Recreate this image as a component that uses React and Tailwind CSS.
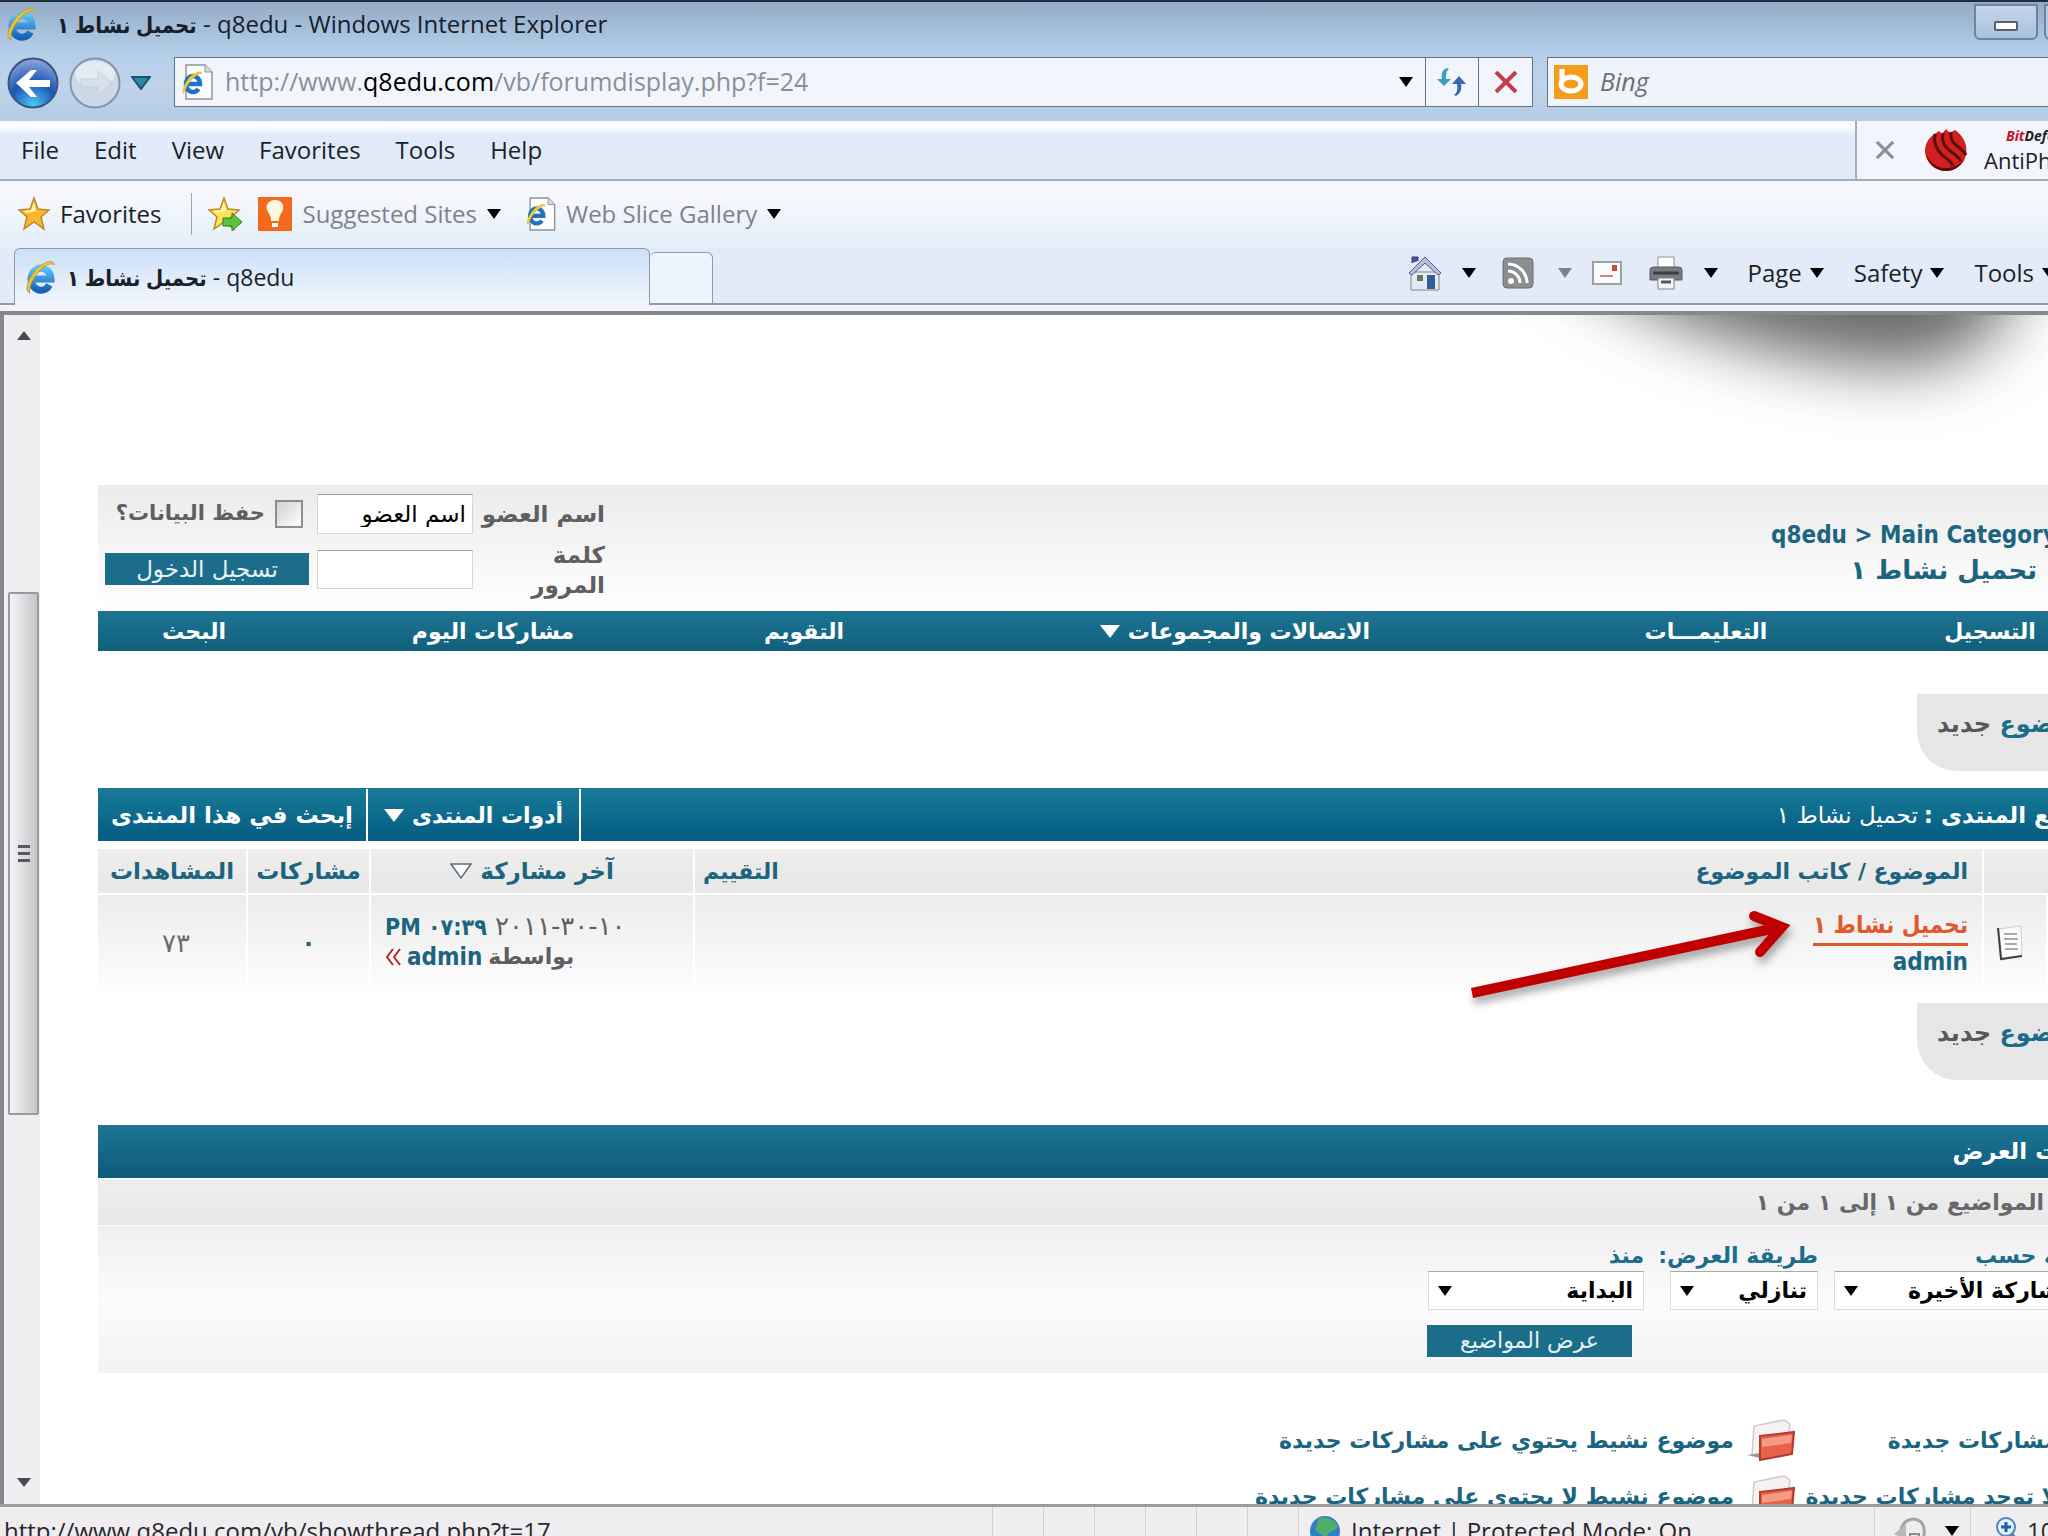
const UI_FONT = "font-[family-name:Open_Sans,DejaVu_Sans_Condensed,sans-serif]";
const FORUM_FONT = "font-[family-name:DejaVu_Sans,sans-serif]";
const NARROW_FONT = "font-[family-name:DejaVu_Sans_Condensed,DejaVu_Sans,sans-serif]";

function IeLogo({ className }) {
  return (
    <svg viewBox="0 0 32 36" className={className} aria-hidden="true">
      <defs>
        <linearGradient id="ie-blue" x1="0" y1="0" x2="0" y2="1">
          <stop offset="0" stopColor="#5cc3f5" />
          <stop offset="1" stopColor="#1763b8" />
        </linearGradient>
      </defs>
      <path d="M8 20 H26 A10 11 0 1 0 24.500 26" fill="none" stroke="url(#ie-blue)" strokeWidth="7" />
      <path d="M5 34 C-2 32 4 17 14 8 C21 2 29 0 29 6 C26 3 20 6 15 11 C8 19 3 28 5 34 Z" fill="#f3c532" stroke="#b8a03a" strokeWidth="1" />
    </svg>
  );
}

function IePage({ className }) {
  return (
    <svg viewBox="0 0 32 36" className={className} aria-hidden="true">
      <path d="M5 1 H24 L31 8 V35 H5 Z" fill="#fdfdfd" stroke="#8d949c" strokeWidth="1.500" />
      <path d="M24 1 V8 H31" fill="#d9dde2" stroke="#8d949c" />
      <path d="M6 20 H19 A7 8 0 1 0 17.500 25" fill="none" stroke="#1f72c4" strokeWidth="4.500" />
      <path d="M3 30 C-1 28 4 17 11 11 C16 7 22 6 21 10 C17 8 5 20 3 30 Z" fill="#e9c63a" />
    </svg>
  );
}

function Caret({ className = "text-black" }) {
  return (
    <svg viewBox="0 0 14 10" className={`h-[10px] w-[14px] shrink-0 ${className}`} aria-hidden="true">
      <path d="M0 0 H14 L7 10 Z" fill="currentColor" />
    </svg>
  );
}

function WideCaret() {
  return (
    <svg viewBox="0 0 20 13" className="h-[13px] w-5 shrink-0" aria-hidden="true">
      <path d="M0 0 H20 L10 13 Z" fill="currentColor" />
    </svg>
  );
}

function Star({ add }) {
  return (
    <svg viewBox="0 0 34 36" className="h-9 w-[34px] shrink-0" aria-hidden="true">
      <path d="M16 2 L20 13 L31 14 L23 21 L26 33 L16 26 L6 33 L9 21 L1 14 L12 13 Z" fill={add ? "#fbe35a" : "#fdb52b"} stroke="#b98a2c" strokeWidth="1.500" />
      <path d="M16 6 L18 15 L9 17 L5 15 L13 14 Z" fill="#fff3b0" />
      {add && <path d="M15 22 H24 V17 L34 26 L24 35 V30 H15 Z" fill="#5cc43a" stroke="#2f7d1e" />}
    </svg>
  );
}

function TitleBar() {
  return (
    <header className="flex h-[52px] items-start justify-between border-t-2 border-[#1f2c3d] bg-linear-to-b from-[#93abc6] to-[#b4cfe9]">
      <div className="flex h-11 items-center gap-[18px] pl-[5px]">
        <IeLogo className="h-9 w-[34px]" />
        <h1 dir="ltr" className="whitespace-nowrap text-[24px] text-[#16202c]">
          <span className="text-[22px] font-bold">تحميل نشاط ١</span> - q8edu - Windows Internet Explorer
        </h1>
      </div>
      <div className="flex gap-[6px] overflow-hidden pt-[2px]">
        <button aria-label="Minimize" className="flex h-9 w-[64px] items-end justify-center rounded-b-md border-2 border-[#6d83a0] bg-linear-to-b from-[#c3d6ea] to-[#a9c3de] pb-[7px]">
          <span className="h-[10px] w-6 rounded-xs border-2 border-[#56606e] bg-white" />
        </button>
        <button aria-label="Maximize" className="-mr-14 h-9 w-[60px] rounded-bl-md border-2 border-[#6d83a0] bg-[#b4cbe3]" />
      </div>
    </header>
  );
}

function AddressBar() {
  return (
    <div className="flex h-[69px] items-start bg-linear-to-b from-[#b4cfe9] via-[#bfd3ea] to-[#b3cde4] pt-[5px]">
      <div className="flex w-[174px] shrink-0 items-center gap-[10px] pl-[7px]">
        <button aria-label="Back">
          <svg viewBox="0 0 52 52" className="h-[52px] w-[52px]">
            <defs>
              <radialGradient id="back-fill" cx="0.5" cy="0.95" r="0.95">
                <stop offset="0" stopColor="#4fc8f6" />
                <stop offset="0.5" stopColor="#1b55b4" />
                <stop offset="1" stopColor="#8fa9de" />
              </radialGradient>
            </defs>
            <circle cx="26" cy="26" r="24.500" fill="url(#back-fill)" stroke="#39557f" strokeWidth="2" />
            <path d="M9 26 L24 13 H30 L22 23 H43 V30 H22 L30 40 H24 Z" fill="#fff" />
          </svg>
        </button>
        <button aria-label="Forward">
          <svg viewBox="0 0 52 52" className="h-[52px] w-[52px]">
            <circle cx="26" cy="26" r="24.500" fill="#cbd8e6" stroke="#8494aa" strokeWidth="2" />
            <ellipse cx="26" cy="17" rx="20" ry="13" fill="#e3ebf3" />
            <path d="M43 26 L29 14 V22 H12 V30 H29 V38 Z" fill="#d7e0eb" stroke="#c3cfdc" />
          </svg>
        </button>
        <svg viewBox="0 0 20 14" className="h-[14px] w-5" aria-hidden="true">
          <path d="M1 1 H19 L10 13 Z" fill="#2b8aa8" stroke="#1f4f74" strokeWidth="2" />
        </svg>
      </div>
      <div className="flex h-[50px] min-w-0 flex-1 items-stretch border border-[#5f7286] bg-[#f2f6fc]">
        <div className="flex min-w-0 flex-1 items-center gap-3 pl-[6px]">
          <IePage className="h-9 w-8 shrink-0" />
          <p className="whitespace-nowrap text-[25px] text-[#8a8f98]">
            http://www.<span className="text-black">q8edu.com</span>/vb/forumdisplay.php?f=24
          </p>
        </div>
        <button aria-label="Address history" className="flex w-[39px] items-center justify-center"><Caret /></button>
        <button aria-label="Refresh" className="flex w-[53px] items-center justify-center border-l border-[#5f7286]">
          <svg viewBox="0 0 32 30" className="h-[30px] w-8">
            <path d="M11 1 C6 3 5 7 6 12 H1 L8 19 L15 12 H10 C10 8 10 4 13 2 Z" fill="#38a0bd" />
            <path d="M20 29 C25 26 26 22 25 17 H30 L23 9 L16 17 H21 C22 22 21 26 18 28 Z" fill="#3a69b0" />
          </svg>
        </button>
        <button aria-label="Stop" className="flex w-[54px] items-center justify-center border-l border-[#5f7286]">
          <svg viewBox="0 0 24 22" className="h-[22px] w-6">
            <path d="M2 1 L22 21 M22 1 L2 21" stroke="#c93a4b" strokeWidth="4" />
          </svg>
        </button>
      </div>
      <div className="ml-[14px] flex h-[50px] w-[501px] shrink-0 items-center gap-3 border border-r-0 border-[#5f7286] bg-[#eff4fb] pl-[6px]">
        <svg viewBox="0 0 34 34" className="h-[34px] w-[34px] shrink-0" aria-hidden="true">
          <rect width="34" height="34" fill="#f59d1a" />
          <path d="M8 4 V18" stroke="#fff" strokeWidth="5" />
          <ellipse cx="17" cy="19" rx="10" ry="7" fill="none" stroke="#fff" strokeWidth="5" />
        </svg>
        <input aria-label="Search" placeholder="Bing" className="w-full bg-transparent text-[25px] italic outline-none placeholder:text-[#6b6f76]" />
      </div>
    </div>
  );
}

function MenuBar() {
  return (
    <div className="flex h-[60px] items-stretch justify-between border-b-2 border-[#a3adba] bg-linear-to-b from-[#fbfcff] from-10% to-[#e1eaf8] to-25%">
      <nav className="flex items-center gap-[35px] pl-[21px] text-[24px] text-[#1b1f27]">
        {["File", "Edit", "View", "Favorites", "Tools", "Help"].map((m) => (
          <button key={m}>{m}</button>
        ))}
      </nav>
      <div className="flex w-[193px] items-center overflow-hidden border-l-2 border-[#a3adba] bg-[#f2f5fc] pl-[18px]">
        <button aria-label="Close toolbar" className="shrink-0">
          <svg viewBox="0 0 22 20" className="h-[18px] w-5">
            <path d="M2 1 L20 19 M20 1 L2 19" stroke="#8b8f96" strokeWidth="3.500" />
          </svg>
        </button>
        <svg viewBox="0 0 44 44" className="ml-[29px] h-[44px] w-[44px] shrink-0" aria-hidden="true">
          <path d="M9 7 L15 3 L18 6 L22 1 L26 5 L31 2 C40 8 44 18 42 27 C40 37 31 43 22 43 C11 43 2 35 1 24 C1 16 4 11 9 7 Z" fill="#d1201f" />
          <path d="M11 6 C9 16 13 22 18 27 C23 31 27 33 29 38 M19 5 C17 13 20 18 25 22 C30 26 34 28 37 33 M27 4 C26 10 29 15 33 18 C37 21 40 23 42 27" fill="none" stroke="#5c0d10" strokeWidth="3" />
          <path d="M2 26 C6 36 15 41 24 40 C31 39 37 36 40 31 C36 39 30 43 22 43 C12 43 4 36 2 26 Z" fill="#5c0d10" />
        </svg>
        <div className="ml-4 flex shrink-0 flex-col text-[#1b1f27]">
          <p className="pl-[22px] text-[14px] leading-5 font-bold italic"><span className="text-[#c8102e]">Bit</span>Defender</p>
          <p className="text-[22px] leading-7">AntiPhishing</p>
        </div>
      </div>
    </div>
  );
}

function FavoritesBar() {
  return (
    <div className="flex h-[67px] items-center bg-linear-to-b from-[#f5f7fd] from-30% to-[#e2eef8] pb-[2px] text-[24px]">
      <button className="flex items-center gap-2 pl-[18px] text-[#1b1f27]"><Star /> Favorites</button>
      <span className="ml-[30px] h-[42px] w-px bg-[#9aa3b0]" />
      <button aria-label="Add to Favorites Bar" className="ml-4"><Star add /></button>
      <button className="ml-4 flex items-center gap-[10px] text-[#7d828b]">
        <svg viewBox="0 0 34 34" className="h-[34px] w-[34px]" aria-hidden="true">
          <rect width="34" height="34" fill="#f36a1d" />
          <path d="M17 3 C9 3 7 10 10 15 C12 18 13 20 13 24 H21 C21 20 22 18 24 15 C27 10 25 3 17 3 Z" fill="#fff6e0" />
          <path d="M14 26 H20 V30 H14 Z" fill="#fff" />
        </svg>
        Suggested Sites <Caret />
      </button>
      <button className="ml-6 flex items-center gap-[10px] text-[#7d828b]">
        <IePage className="h-[34px] w-[31px]" />
        Web Slice Gallery <Caret />
      </button>
    </div>
  );
}

function CommandBar() {
  return (
    <div className="flex items-center pb-[6px] text-[24px] text-[#1b1f27]">
      <button aria-label="Home" className="flex items-center gap-5">
        <svg viewBox="0 0 34 36" className="h-9 w-[34px]">
          <path d="M4 8 V2 H10 V6" fill="#4b4fae" stroke="#3c3f80" />
          <path d="M3 17 H31 V35 H3 Z" fill="#e6e9ef" stroke="#7e8592" />
          <path d="M1 18 L17 2 L33 18 L30 20 L17 8 L4 20 Z" fill="#b9bfd6" stroke="#53599a" />
          <path d="M19 20 H27 V34 H19 Z" fill="#2e5f99" />
          <path d="M9 20 H15 V26 H9 Z" fill="#5f7b63" />
        </svg>
        <Caret />
      </button>
      <button aria-label="Feeds" className="ml-[26px] flex items-center gap-6">
        <svg viewBox="0 0 32 32" className="h-8 w-8">
          <rect x="1" y="1" width="30" height="30" rx="4" fill="#8b8d8f" stroke="#6d7072" />
          <circle cx="9" cy="24" r="3" fill="#fff" />
          <path d="M6 14 A12 12 0 0 1 18 26 M6 7 A19 19 0 0 1 25 26" fill="none" stroke="#fff" strokeWidth="3" />
        </svg>
        <Caret className="text-[#7c828b]" />
      </button>
      <button aria-label="Read mail" className="ml-5">
        <svg viewBox="0 0 30 24" className="h-6 w-[30px]">
          <rect x="1" y="1" width="28" height="22" fill="#fbfbfb" stroke="#9aa0a8" strokeWidth="2" />
          <rect x="20" y="4" width="5" height="6" fill="#c64a48" />
          <path d="M8 15 H21" stroke="#c08a88" strokeWidth="2" />
        </svg>
      </button>
      <button aria-label="Print" className="ml-[26px] flex items-center gap-5">
        <svg viewBox="0 0 36 34" className="h-[34px] w-9">
          <path d="M10 1 H26 V14 H10 Z" fill="#fff" stroke="#8d9298" />
          <path d="M2 14 Q2 11 6 11 H30 Q34 11 34 14 V24 H2 Z" fill="#777c82" stroke="#54585e" />
          <path d="M5 17 H31" stroke="#3c4046" strokeWidth="3" />
          <path d="M10 22 H26 V33 H10 Z" fill="#f6f6f6" stroke="#7f848a" />
          <path d="M13 26 H23" stroke="#54585e" strokeWidth="3" />
        </svg>
        <Caret />
      </button>
      <button className="ml-[30px] flex items-center gap-2">Page <Caret /></button>
      <button className="ml-[30px] flex items-center gap-2">Safety <Caret /></button>
      <button className="-mr-2 ml-[30px] flex items-center gap-2">Tools <Caret /></button>
    </div>
  );
}

function TabRow() {
  return (
    <div className="flex h-[57px] shrink-0 items-stretch bg-[#e2ebf7]">
      <div className="w-[14px] border-b-2 border-[#8f9bab]" />
      <div className="flex w-[636px] items-center gap-[10px] rounded-t-md border border-b-0 border-[#8f9bab] bg-linear-to-b from-[#cbdff7] to-[#f3f7fd] pl-[10px] text-[23px] text-[#1b1f27]">
        <IeLogo className="h-9 w-8" />
        <p dir="ltr"><span className="text-[22px] font-bold">تحميل نشاط ١</span> - q8edu</p>
      </div>
      <div className="flex flex-1 items-stretch justify-between border-b-2 border-[#8f9bab]">
        <button aria-label="New tab" className="mt-1 w-[63px] rounded-t-md border border-b-0 border-l-0 border-[#8f9bab] bg-[#eef4fc]" />
        <CommandBar />
      </div>
    </div>
  );
}

function Scrollbar() {
  return (
    <div className="flex w-10 shrink-0 flex-col border-l-4 border-[#85888c] bg-[#f0eef1] pl-1">
      <button aria-label="Scroll up" className="flex h-10 items-center justify-center">
        <svg viewBox="0 0 14 9" className="h-[9px] w-[14px]"><path d="M0 9 L7 0 L14 9 Z" fill="#474b52" /></svg>
      </button>
      <div className="mt-[237px] flex h-[523px] w-[31px] flex-col items-center justify-center gap-1 rounded-xs border-2 border-[#979a9f] bg-linear-to-r from-[#f5f5f6] to-[#c6c6ca]">
        <span className="h-[3px] w-3 bg-[#55585e]" />
        <span className="h-[3px] w-3 bg-[#55585e]" />
        <span className="h-[3px] w-3 bg-[#55585e]" />
      </div>
      <button aria-label="Scroll down" className="mt-auto flex h-11 items-center justify-center">
        <svg viewBox="0 0 14 9" className="h-[9px] w-[14px]"><path d="M0 0 H14 L7 9 Z" fill="#474b52" /></svg>
      </button>
    </div>
  );
}

function LoginForm() {
  return (
    <form className="grid w-[513px] grid-cols-[126px_156px_206px] content-start gap-x-[6px] pt-[9px] pr-[6px] text-[23px] font-bold text-[#5d5f63]">
      <label htmlFor="username" className="flex h-10 items-center whitespace-nowrap">اسم العضو</label>
      <input id="username" defaultValue="اسم العضو" className="h-10 w-full border border-[#d5d5d5] border-t-[#9b9b9b] bg-white px-[6px] font-normal text-black" />
      <label className="flex h-10 items-center gap-[10px] whitespace-nowrap pr-2 text-[21px]">
        <input type="checkbox" className="h-7 w-7 shrink-0 appearance-none border-2 border-[#8a8d91] bg-linear-to-br from-[#cfd1d3] to-white" />
        حفظ البيانات؟
      </label>
      <label htmlFor="password" className="mt-[6px] w-20 leading-[30px]">كلمة المرور</label>
      <input id="password" type="password" className="mt-4 h-[39px] w-full border border-[#d5d5d5] border-t-[#9b9b9b] bg-white px-[6px]" />
      <button type="button" className="mt-[19px] h-8 w-[204px] justify-self-end bg-[#1b6d8a] leading-8 font-normal text-[#e5f2f6]">تسجيل الدخول</button>
    </form>
  );
}

function ForumNav() {
  return (
    <nav className="grid h-10 grid-cols-[272fr_296fr_646fr_216fr_406fr_192fr] items-center border-t border-[#2d6f86] bg-linear-to-b from-[#1d7593] to-[#115f7c] text-center text-[22px] font-bold text-white">
      <a href="#register">التسجيل</a>
      <a href="#faq">التعليمـــات</a>
      <a href="#community" className="flex items-center justify-center gap-2">
        الاتصالات والمجموعات
        <WideCaret />
      </a>
      <a href="#calendar">التقويم</a>
      <a href="#today">مشاركات اليوم</a>
      <a href="#search">البحث</a>
    </nav>
  );
}

function NewTopic({ className }) {
  return (
    <a href="#new" className={`flex h-[77px] w-[209px] items-start justify-end rounded-bl-[40px] bg-[#e6e6e6] pt-3 pl-5 text-[24px] font-bold text-[#1b6d8a] ${className}`}>
      <span className="whitespace-nowrap">موضوع <span className="text-[#55575b]">جديد</span></span>
    </a>
  );
}

function ThreadTable() {
  return (
    <table className="mt-2 w-full table-fixed border-separate border-spacing-0 text-[23px]">
      <colgroup>
        <col className="w-[80px]" />
        <col className="w-[64px]" />
        <col />
        <col className="w-[324px]" />
        <col className="w-[123px]" />
        <col className="w-[148px]" />
      </colgroup>
      <thead>
        <tr className="h-[44px] whitespace-nowrap text-[#1b6580] *:bg-linear-to-b *:from-[#efeeec] *:to-[#e7e7e8] [&>*:not(:last-child)]:border-l-2 [&>*:not(:last-child)]:border-white">
          <th colSpan={2} />
          <th className="pr-[14px] pl-2 text-[22px]">
            <div className="flex justify-between"><span>الموضوع / كاتب الموضوع</span><span>التقييم</span></div>
          </th>
          <th>
            <span className="flex items-center justify-center gap-2">
              آخر مشاركة
              <svg viewBox="0 0 22 16" className="h-4 w-[22px]"><path d="M1 1 H21 L11 15 Z" fill="#fff" stroke="#55707c" strokeWidth="1.500" /></svg>
            </span>
          </th>
          <th>مشاركات</th>
          <th>المشاهدات</th>
        </tr>
      </thead>
      <tbody>
        <tr className="h-[98px] *:border-t-2 *:border-white *:bg-linear-to-b *:from-[#ececed] *:to-[#fdfdfd] [&>*:not(:last-child)]:border-l-2">
          <td />
          <td>
            <svg viewBox="0 0 28 36" className="mr-[22px] h-9 w-7" aria-hidden="true">
              <path d="M3 4 L25 1 L26 30 L6 35 Z" fill="#fafafa" stroke="#cfcfcf" />
              <path d="M2 3 L5 34 L26 31" fill="none" stroke="#3e3e40" strokeWidth="2" />
              <path d="M8 9 H21 M8 14 H22 M9 19 H21 M9 24 H22" stroke="#aaaaac" strokeWidth="2" />
            </svg>
          </td>
          <td className="relative pr-[14px] align-top">
            <div className={`flex flex-col items-start pt-3 font-bold ${NARROW_FONT}`}>
              <a href="#thread" className="border-b-[3px] border-[#e2572b] text-[24px] leading-9 text-[#e2572b]">تحميل نشاط ١</a>
              <a href="#admin" className="text-[24px] leading-8 text-[#1b6580]">admin</a>
            </div>
            <svg viewBox="0 0 330 100" className="absolute top-[14px] right-[184px] h-[100px] w-[330px] overflow-visible drop-shadow-[2px_6px_4px_rgba(0,0,0,0.35)]" aria-hidden="true">
              <path d="M4 84 L308 19" stroke="#c00000" strokeWidth="10" />
              <path d="M286 7 L314 18 L292 43" fill="none" stroke="#c00000" strokeWidth="10" strokeLinecap="round" strokeLinejoin="miter" />
            </svg>
          </td>
          <td className="pl-[14px] align-top text-[#5d5f63]">
            <div className="flex flex-col items-end pt-4 leading-[30px] whitespace-nowrap">
              <p className="text-[26px]">١٠-٣٠-٢٠١١ <b className={`text-[23px] text-[#1b6580] ${NARROW_FONT}`}>٠٧:٣٩ PM</b></p>
              <p className="flex items-center gap-[6px]">
                <b className="text-[22px]">بواسطة</b>
                <a href="#admin" className={`text-[24px] font-bold text-[#1b6580] ${NARROW_FONT}`}>admin</a>
                <svg viewBox="0 0 16 18" className="h-[18px] w-4"><path d="M8 1 L2 9 L8 17 M15 1 L9 9 L15 17" fill="none" stroke="#b3282d" strokeWidth="2" /></svg>
              </p>
            </div>
          </td>
          <td className="text-center font-bold text-[#1b6580]">٠</td>
          <td className="pl-2 text-center text-[26px] text-[#6a6c70]">٧٣</td>
        </tr>
      </tbody>
    </table>
  );
}

function FilterSelect({ id, label, option, className }) {
  return (
    <div className={`flex flex-col ${className}`}>
      <label htmlFor={id} className="h-[31px] whitespace-nowrap leading-[31px] text-[#1b6d8a]">{label}</label>
      <div className="relative">
        <select id={id} className="h-[39px] w-full appearance-none border border-[#dcdcdc] border-t-[#a9a9a9] bg-white pr-[10px] pl-10 font-bold text-black">
          <option>{option}</option>
        </select>
        <span className="pointer-events-none absolute top-[15px] left-[10px]"><Caret /></span>
      </div>
    </div>
  );
}

function DisplayOptions() {
  return (
    <section className="mt-[45px] text-[22px] font-bold">
      <h2 className="flex h-[53px] items-center bg-linear-to-b from-[#1e7592] to-[#0d5a7c] pr-3 text-[23px] text-white">خيارات العرض</h2>
      <p className="flex h-[48px] items-center border-y border-white bg-linear-to-b from-[#efeeec] to-[#e8e8ea] pr-4 text-[#66686c]">عرض المواضيع من ١ إلى ١ من ١</p>
      <form className="h-[147px] bg-linear-to-b from-[#efeff1] via-[#fbfbfc] to-[#f3f3f5] pt-[14px] pr-6">
        <div className="flex">
          <FilterSelect id="sort" label="مرتبة حسب" option="المشاركة الأخيرة" className="w-[268px]" />
          <FilterSelect id="order" label="طريقة العرض:" option="تنازلي" className="mr-4 w-[148px]" />
          <FilterSelect id="since" label="منذ" option="البداية" className="mr-[26px] w-[216px]" />
        </div>
        <button type="button" className="mt-[15px] mr-[470px] block h-8 w-[205px] bg-[#1b6d8a] leading-8 font-normal text-[#e5f2f6]">عرض المواضيع</button>
      </form>
    </section>
  );
}

function HotFolder() {
  return (
    <svg viewBox="0 0 50 42" className="h-[42px] w-[50px] shrink-0" aria-hidden="true">
      <path d="M6 36 L8 7 L38 1 L44 5 L40 34 Z" fill="#f5f2f2" stroke="#cdc9c9" strokeWidth="1.500" />
      <path d="M1 36 L14 34 V39 Z" fill="#9a9898" />
      <path d="M14 17 L48 13 L46 35 L14 41 Z" fill="#e8614d" stroke="#b03b2c" strokeWidth="2" />
      <path d="M16 20 L46 16 L45 24 L16 28 Z" fill="#f79a84" />
    </svg>
  );
}

const legend = [
  ["مشاركات جديدة", "موضوع نشيط يحتوي على مشاركات جديدة"],
  ["لا توجد مشاركات جديدة", "موضوع نشيط لا يحتوي على مشاركات جديدة"],
];

function Legend() {
  return (
    <ul className="mt-[46px] flex flex-col gap-[14px] text-[22px] font-bold whitespace-nowrap text-[#1b6580]">
      {legend.map(([first, second]) => (
        <li key={second} className="flex h-[42px] items-center">
          <span className="w-[330px] shrink-0 pr-[68px]">{first}</span>
          <span className="flex items-center gap-3"><HotFolder /> {second}</span>
        </li>
      ))}
    </ul>
  );
}

function Forum() {
  return (
    <div dir="rtl" className={`w-[calc(100%+78px)] shrink-0 ${FORUM_FONT}`}>
      <div dir="ltr" className="relative h-[170px]">
        <svg viewBox="0 0 640 169" className="absolute top-0 right-[78px] h-[169px] w-[640px]" aria-hidden="true">
          <defs>
            <filter id="soft" x="-40%" y="-100%" width="180%" height="300%">
              <feGaussianBlur stdDeviation="34 32" />
            </filter>
          </defs>
          <path d="M130 -90 C200 0 370 50 500 52 C575 48 610 0 625 -90 Z" fill="#6a6a6a" filter="url(#soft)" />
        </svg>
      </div>
      <div className="flex h-[126px] justify-between bg-linear-to-b from-[#ebebeb] to-white font-bold text-[#1b6580]">
        <div className="pt-[33px] pr-[60px]">
          <p dir="ltr" className={`-mr-[40px] w-[335px] text-[24px] leading-[34px] whitespace-nowrap ${NARROW_FONT}`}>q8edu &gt; Main Category</p>
          <p className="pr-[29px] text-[26px] leading-[36px]">تحميل نشاط ١</p>
        </div>
        <LoginForm />
      </div>
      <ForumNav />
      <NewTopic className="mt-[43px]" />
      <div className="mt-[17px] flex h-[53px] items-stretch border-t border-[#2d6f86] bg-linear-to-b from-[#177a96] to-[#045c82] text-[23px] font-bold text-white">
        <p className="flex flex-1 items-center gap-[6px] pr-2">مواضيع المنتدى : <span className="font-normal">تحميل نشاط ١</span></p>
        <button className="flex w-[213px] items-center justify-center gap-2 border-r-2 border-white text-[22px]">أدوات المنتدى <WideCaret /></button>
        <button className="w-[270px] border-r-2 border-white">إبحث في هذا المنتدى</button>
      </div>
      <ThreadTable />
      <NewTopic className="mt-3" />
      <DisplayOptions />
      <Legend />
    </div>
  );
}

function StatusBar() {
  return (
    <footer className="h-[32px] shrink-0 overflow-hidden border-t-[3px] border-[#9c9ca0] bg-[#f0edf0] text-[24px] text-[#26282c]">
      <div className="flex h-12 items-stretch pl-1">
        <p className="flex-1 self-center whitespace-nowrap">http://www.q8edu.com/vb/showthread.php?t=17</p>
        {[1, 2, 3, 4, 5, 6].map((n) => (
          <span key={n} className="w-[51px] border-l border-[#d3d0d4]" />
        ))}
        <div className="flex w-[576px] items-center gap-[10px] border-l border-[#d3d0d4] pl-[10px]">
          <svg viewBox="0 0 32 32" className="h-8 w-8">
            <circle cx="16" cy="16" r="15" fill="#2f7fc4" />
            <path d="M10 3 C18 1 26 5 29 11 C26 18 21 14 19 20 C14 24 10 17 6 15 Z" fill="#4fae6a" />
          </svg>
          Internet | Protected Mode: On
        </div>
        <button aria-label="Privacy" className="flex w-[96px] items-center gap-[18px] border-l border-[#d3d0d4] pl-[18px]">
          <svg viewBox="0 0 34 34" className="h-[34px] w-[34px]">
            <path d="M8 16 C10 6 20 2 28 8 C33 14 32 22 28 27" fill="none" stroke="#a5a5a9" strokeWidth="3" />
            <path d="M1 20 L13 10 V26 Z" fill="#b9b9bd" />
            <path d="M17 30 V20 H26 V30 Z" fill="none" stroke="#8d8d92" strokeWidth="2" />
          </svg>
          <Caret />
        </button>
        <button className="flex w-[78px] items-center gap-2 overflow-hidden border-l border-[#d3d0d4] pl-6">
          <svg viewBox="0 0 24 30" className="h-[30px] w-6 shrink-0">
            <path d="M16 17 L23 28" stroke="#6c7a8a" strokeWidth="4" />
            <circle cx="11" cy="11" r="9" fill="#e3f1fb" stroke="#4a86c0" strokeWidth="2" />
            <path d="M11 6 V16 M6 11 H16" stroke="#1e5fae" strokeWidth="3" />
          </svg>
          100%
        </button>
      </div>
    </footer>
  );
}

export default function App() {
  return (
    <div className={`flex h-screen flex-col overflow-hidden bg-white ${UI_FONT}`}>
      <TitleBar />
      <AddressBar />
      <MenuBar />
      <FavoritesBar />
      <TabRow />
      <div className="h-[10px] shrink-0 border-b-4 border-[#85888c] bg-[#f2f4f9]" />
      <div className="flex min-h-0 flex-1">
        <Scrollbar />
        <main className="flex min-w-0 flex-1 items-start overflow-hidden pl-[58px]">
          <Forum />
        </main>
      </div>
      <StatusBar />
    </div>
  );
}
